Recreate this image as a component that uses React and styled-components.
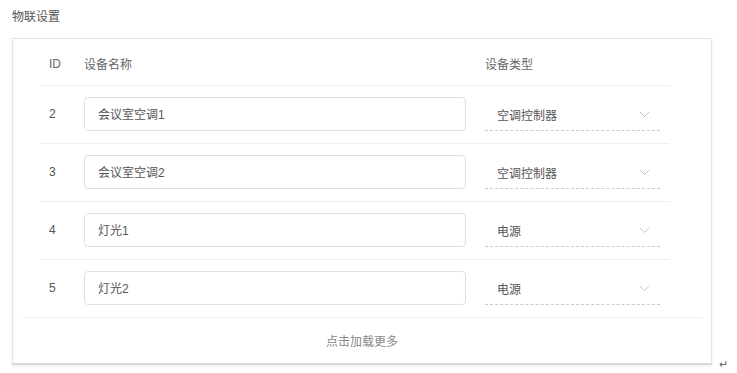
import styled, { createGlobalStyle } from 'styled-components'

const GlobalStyle = createGlobalStyle`
    body {
        margin: 0;
        background: #fff;
        font-family: "Liberation Sans", "Noto Sans CJK SC", sans-serif;
        color: #333;
    }
`

const Page = styled.div`
    width: 737px;
    height: 373px;
    padding: 8px 25px 0 12px;
    box-sizing: border-box;
    position: relative;
`
const Title = styled.div`
    font-size: 12px;
    line-height: 18px;
    color: #555;
    margin-bottom: 12px;
`
const Card = styled.div`
    width: 700px;
    height: 327px;
    box-sizing: border-box;
    border: 1px solid #e3e4e9;
    border-bottom: 2px solid #d6d8de;
    box-shadow: 0 1px 3px rgba(0, 0, 0, 0.08);
    background: #fff;
    display: flex;
    flex-direction: column;
`
const Table = styled.div`
    margin: 0 41px 0 27px;
    display: flex;
    flex-direction: column;
`
const Row = styled.div`
    display: grid;
    grid-template-columns: 35px 401px 1fr;
    align-items: center;
    height: ${p => (p.$head ? '47px' : '58px')};
    padding: ${p => (p.$head ? '3px 0 0' : '0 0 2px')};
    border-bottom: 1px solid #ebeef5;
    box-sizing: border-box;
    font-size: 12px;
`
const HeadCell = styled.div`
    color: #666;
    padding-left: 9px;
`
const IdCell = styled.div`
    color: #555;
    padding-left: 9px;
`
const Cell = styled.div`
    padding: 0 10px 0 9px;
`
const Input = styled.div`
    height: 34px;
    border: 1px solid #dcdfe6;
    border-radius: 4px;
    box-sizing: border-box;
    display: flex;
    align-items: center;
    padding-left: 13px;
    color: #555;
`
const Select = styled.div`
    height: 32px;
    margin-top: 2px;
    border-bottom: 1px dashed #c8cbd2;
    display: flex;
    align-items: center;
    justify-content: space-between;
    padding: 0 10px 0 12px;
    color: #555;
`
const Footer = styled.div`
    margin: -1px 9px 0;
    border-top: 1px solid #ebeef5;
    flex: 1;
    display: flex;
    align-items: center;
    justify-content: center;
    font-size: 12px;
    color: #888;
`
const Mark = styled.span`
    position: absolute;
    left: 719px;
    top: 358px;
    font-size: 11px;
    color: #666;
`

const Chevron = () => (
    <svg width="11" height="7" viewBox="0 0 11 7" fill="none">
        <path d="M1 1l4.5 4.5L10 1" stroke="#c0c4cc" strokeWidth="1" />
    </svg>
)

const devices = [
    { id: 2, name: '会议室空调1', type: '空调控制器' },
    { id: 3, name: '会议室空调2', type: '空调控制器' },
    { id: 4, name: '灯光1', type: '电源' },
    { id: 5, name: '灯光2', type: '电源' },
]

const App = () => {
    return (
        <Page>
            <GlobalStyle />
            <Title>物联设置</Title>
            <Card>
                <Table>
                    <Row $head>
                        <HeadCell>ID</HeadCell>
                        <HeadCell>设备名称</HeadCell>
                        <HeadCell>设备类型</HeadCell>
                    </Row>
                    {devices.map(d => (
                        <Row key={d.id}>
                            <IdCell>{d.id}</IdCell>
                            <Cell>
                                <Input>{d.name}</Input>
                            </Cell>
                            <Cell>
                                <Select>
                                    <span>{d.type}</span>
                                    <Chevron />
                                </Select>
                            </Cell>
                        </Row>
                    ))}
                </Table>
                <Footer>点击加载更多</Footer>
            </Card>
            <Mark>↵</Mark>
        </Page>
    )
}

export default App
